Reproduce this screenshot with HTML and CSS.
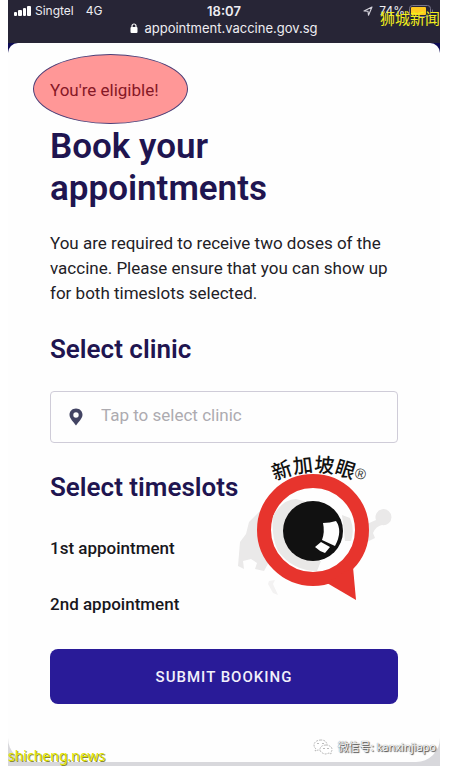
FILE: index.html
```
<!DOCTYPE html>
<html lang="en">
<head>
    <meta charset="UTF-8">
    <meta name="viewport" content="width=device-width, initial-scale=1.0">
    <title>Book your appointments</title>
    <link rel="stylesheet" href="styles.css">
</head>
<body>
    <div class="phone">
        <header class="topbar">
            <div class="status">
                <div class="carrier">
                    <svg width="17" height="10" viewBox="0 0 17 10" fill="#fff">
                        <rect x="0" y="6" width="3" height="4" rx="1"/>
                        <rect x="4" y="4" width="4" height="6" rx="1"/>
                        <rect x="9" y="2" width="3" height="8" rx="1"/>
                        <rect x="13" y="0" width="4" height="10" rx="1"/>
                    </svg>
                    <span>Singtel</span>
                    <span class="network">4G</span>
                </div>
                <div class="time">18:07</div>
                <div class="battery">
                    <svg width="10" height="10" viewBox="0 0 10 10" fill="none" stroke="#d5d3dc" stroke-width="1.1" stroke-linejoin="round">
                        <path d="M9 1 L1 5 L5 5.300 L5.500 9.300 Z"/>
                    </svg>
                    <span class="percent">74%</span>
                    <svg width="25" height="12" viewBox="0 0 25 12">
                        <rect x="0.500" y="0.500" width="21" height="11" rx="3" fill="none" stroke="#77748a"/>
                        <rect x="2" y="2" width="15" height="8" rx="1" fill="#ffc91f"/>
                        <path d="M23 4 Q25 6 23 8 Z" fill="#77748a"/>
                    </svg>
                </div>
            </div>
            <div class="address">
                <svg width="8" height="10" viewBox="0 0 8 10">
                    <rect x="0.500" y="4" width="7" height="6" rx="1" fill="#fff"/>
                    <path d="M2 5 V3 a2 2 0 0 1 4 0 V5" fill="none" stroke="#fff" stroke-width="1.2"/>
                </svg>
                <span>appointment.vaccine.gov.sg</span>
            </div>
            <div class="mark mark-top" lang="zh">狮城新闻</div>
        </header>

        <div class="sheet-wrap">
            <main class="sheet">
                <p class="eligible">You're eligible!</p>
                <h1>Book your appointments</h1>
                <p class="intro">You are required to receive two doses of the vaccine. Please ensure that you can show up for both timeslots selected.</p>

                <form>
                    <h2><label for="clinic">Select clinic</label></h2>
                    <div class="field">
                        <svg width="14" height="18" viewBox="0 0 14 18">
                            <path fill="#424463" fill-rule="evenodd" d="M7 0.500 C3 0.500 0.500 3.500 0.500 6.800 C0.500 10.500 4.500 14 7 17.500 C9.500 14 13.500 10.500 13.500 6.800 C13.500 3.500 11 0.500 7 0.500 Z M7 4.300 a2.700 2.700 0 1 1 0 5.400 a2.700 2.700 0 1 1 0 -5.400 Z"/>
                        </svg>
                        <input type="text" id="clinic" placeholder="Tap to select clinic">
                    </div>

                    <section class="timeslots">
                        <h2>Select timeslots</h2>
                        <h3>1st appointment</h3>
                        <h3>2nd appointment</h3>
                        <svg class="logo" width="160" height="155" viewBox="0 0 160 155">
                            <!-- world map -->
                            <g fill="#eae9e9">
                                <path d="M26 60 L14 72 L11 84 L5 92 L3 116 L9 119 L8 111 L16 109 L22 113 L20 119 L29 121 L34 112 L40 108 L32 92 Z"/>
                                <path d="M141 70 a8 8 0 1 1 6 5 Q141 76 138 83 L140 88 L132 92 L132 74 Z"/>
                                <path d="M34 131 l6 -1 l-2 4 l5 11 l-5 -2 l-5 -9 Z" fill="#f3f2f2"/>
                            </g>
                            <circle cx="78" cy="80" r="49" fill="#fefefe" stroke="#e7342d" stroke-width="14"/>
                            <path d="M92 133 L121 150 L118 117 Z" fill="#e7342d"/>
                            <path d="M38 66 Q48 49 61 49 L72 52 Q52 61 50 78 Q50 100 66 108 L86 111 L82 121 Q58 121 43 101 Q36 86 38 66 Z M107 65 L115 68 Q120 80 116 91 L110 91 Z" fill="#e9e8e7"/>
                            <circle cx="78" cy="81" r="30" fill="#111"/>
                            <path d="M88 73 Q95 73 101 71 Q108 81 100 96 L87 90 Q90 82 88 73 Z M86 92 L95 97 L90 103 Q84 101 80 97 Z" fill="#fff"/>
                            <path id="arc" d="M40 31 A93 93 0 0 1 120 31" fill="none"/>
                            <text class="logo-name" lang="zh"><textPath href="#arc">新加坡眼</textPath></text>
                            <text class="logo-reg" x="120" y="29" transform="rotate(12 126 24)">®</text>
                        </svg>
                    </section>

                    <button type="button">SUBMIT BOOKING</button>
                </form>
            </main>
            <div class="mark mark-site">shicheng.news</div>
            <div class="mark mark-wechat">
                <svg width="20" height="16" viewBox="0 0 20 16" fill="#fff" stroke="#aaa" stroke-width="0.8" stroke-dasharray="2 1">
                    <path d="M8 1 C3 1 1 4 1 6 C1 8 2 9 3 10 L2 12 L5 11 L8 11 C13 11 15 8 14 5 C13 2 11 1 8 1 Z"/>
                    <path d="M13 6 C9 6 7 8 7 10.500 C7 13 10 15 13 15 L16 14 L18 15 L18 13 C19 12 19 11 19 10 C19 8 16 6 13 6 Z"/>
                    <path d="M5 4v1M10 4v1M11 9v1M15 9v1" stroke="#555" stroke-dasharray="none"/>
                </svg>
                <span><span lang="zh">微信号</span>: kanxinjiapo</span>
            </div>
        </div>
    </div>
</body>
</html>
```
FILE: styles.css
```
* {
    box-sizing: border-box;
}

body {
    margin: 0;
    background-color: #fff;
    font-family: Roboto, "Noto Sans CJK SC", sans-serif;
    color: #222126;
}

.phone {
    margin: 0 9px 0 8px;
    background-color: #272536;
}

/* browser bar */
.topbar {
    position: relative;
    height: 43px;
    padding: 3px 6px 0;
    font-family: Inter, "Liberation Sans", sans-serif;
    color: #eeedf2;
}
.status {
    display: grid;
    grid-template-columns: 1fr auto 1fr;
    align-items: center;
    font-size: 12px;
    line-height: 16px;
}
.carrier {
    display: flex;
    align-items: center;
    gap: 4px;
}
.network {
    margin-left: 8px;
}
.time {
    font-size: 13px;
    font-weight: 600;
}
.battery {
    display: flex;
    align-items: center;
    justify-content: flex-end;
    gap: 4px;
}
.percent {
    margin-left: 2px;
}
.address {
    display: flex;
    align-items: center;
    justify-content: center;
    gap: 6px;
    font-size: 13px;
    line-height: 18px;
}

/* page */
.sheet-wrap {
    position: relative;
    padding-bottom: 4px;
    background: linear-gradient(#0d0b55 0, #0d0b55 40px, #d8d8dc 41px, #d8d8dc 100%);
}
.sheet {
    padding: 35px 42px 58px;
    background-color: #fefefe;
    border-radius: 10px 10px 24px 24px;
}
p {
    margin: 0;
    font-size: 17px;
    line-height: 25px;
}
.eligible {
    position: relative;
    color: #861726;
    width: fit-content;
    z-index: 0;
}
.eligible::before {
    content: "";
    position: absolute;
    z-index: -1;
    left: -17px;
    top: -24px;
    width: 153px;
    height: 68px;
    background-color: #ff9797;
    border: 1px solid #4b3f78;
    border-radius: 50%;
}
h1 {
    margin: 23px 0 21px;
    max-width: 300px;
    font-size: 35px;
    font-weight: 600;
    line-height: 42px;
    color: #1f1550;
}
h2 {
    margin: 27px 0 26px;
    font-size: 26px;
    font-weight: 600;
    line-height: 32px;
    color: #1f1550;
}
h3 {
    margin: 0 0 32px;
    font-size: 17px;
    font-weight: 500;
    line-height: 24px;
    color: #18171c;
}
.field {
    display: flex;
    align-items: center;
    gap: 18px;
    height: 52px;
    padding: 0 18px;
    border: 1px solid #cfccd8;
    border-radius: 4px;
}
.field input {
    flex: 1;
    min-width: 0;
    padding: 0 0 4px;
    border: 0;
    outline: 0;
    background: none;
    font: inherit;
    font-size: 17px;
}
.field input::placeholder {
    color: #adabb0;
}
.timeslots {
    position: relative;
    margin-top: 28px;
}
.timeslots h2 {
    margin: 0 0 33px;
}
.timeslots h3:last-of-type {
    margin-bottom: 33px;
}
.logo {
    position: absolute;
    top: -21px;
    right: 3px;
    overflow: visible;
}
.logo-name {
    font: 500 20px "Noto Sans CJK SC", sans-serif;
    fill: #111;
}
.logo-reg {
    font: 15px "Liberation Sans", sans-serif;
    fill: #333;
}
button {
    display: block;
    width: 100%;
    height: 55px;
    border: 0;
    border-radius: 8px;
    background-color: #291b98;
    color: #f2f0fb;
    font: 500 15px Roboto, sans-serif;
    letter-spacing: 1px;
    cursor: pointer;
}

/* watermarks */
.mark {
    position: absolute;
    white-space: nowrap;
}
.mark-top {
    right: 0;
    top: 8px;
    font: 15px/20px "Noto Sans CJK SC", sans-serif;
    color: #f2ef1c;
}
.mark-site {
    left: 0;
    bottom: 0;
    font: 14px/20px "Noto Sans", sans-serif;
    color: #e2e500;
    text-shadow: 1px 1px 0 #8a8c30;
}
.mark-wechat {
    right: 4px;
    bottom: 10px;
    display: flex;
    align-items: center;
    gap: 5px;
    font: 11px/18px "Noto Sans", "Noto Sans CJK SC", sans-serif;
    color: #fff;
    text-shadow: 1px 1px 1px #333, 0 0 1px #555;
}
```
